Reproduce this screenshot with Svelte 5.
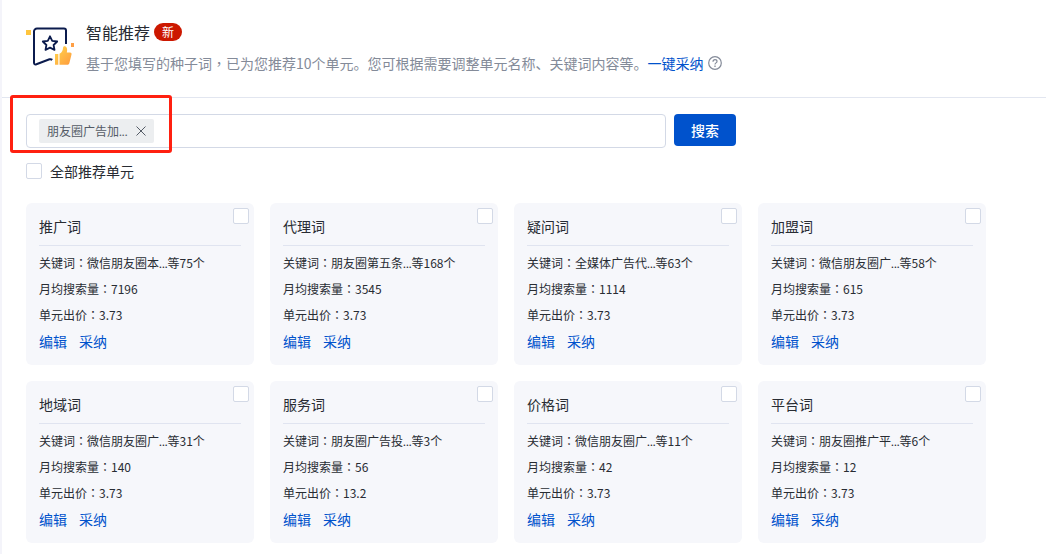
<script lang="ts">
	interface Unit {
		name: string;
		keyword: string;
		count: number;
		volume: number;
		price: number;
	}

	const units: Unit[] = [
		{ name: '推广词', keyword: '微信朋友圈本', count: 75, volume: 7196, price: 3.73 },
		{ name: '代理词', keyword: '朋友圈第五条', count: 168, volume: 3545, price: 3.73 },
		{ name: '疑问词', keyword: '全媒体广告代', count: 63, volume: 1114, price: 3.73 },
		{ name: '加盟词', keyword: '微信朋友圈广', count: 58, volume: 615, price: 3.73 },
		{ name: '地域词', keyword: '微信朋友圈广', count: 31, volume: 140, price: 3.73 },
		{ name: '服务词', keyword: '朋友圈广告投', count: 3, volume: 56, price: 13.2 },
		{ name: '价格词', keyword: '微信朋友圈广', count: 11, volume: 42, price: 3.73 },
		{ name: '平台词', keyword: '朋友圈推广平', count: 6, volume: 12, price: 3.73 }
	];

	let seeds = $state(['朋友圈广告加']);
	let query = $state('');
	let selected = $state(units.map(() => false));
	let allSelected = $derived(selected.every(Boolean));

	function toggleAll() {
		const next = !allSelected;
		selected = units.map(() => next);
	}

	function removeSeed(seed: string) {
		seeds = seeds.filter((s) => s !== seed);
	}
</script>

<main class="panel">
	<header class="intro">
		<svg class="intro-icon" width="48" height="44" viewBox="0 0 48 44" fill="none" aria-hidden="true">
			<defs>
				<linearGradient id="thumb" x1="0" y1="0" x2="1" y2="1">
					<stop offset="0" stop-color="#ffd84d" />
					<stop offset="1" stop-color="#ff9a3d" />
				</linearGradient>
			</defs>
			<rect x="0" y="6" width="5" height="5" fill="#ffc53d" />
			<rect x="45" y="19" width="3" height="4" fill="#ff9f45" />
			<path
				d="M40 20V6.500a2 2 0 0 0-2-2H11a3 3 0 0 0-3 3V38.500q0 2.600 2.400 1.800L23.500 35.300q1.400-.5 2.800.6"
				stroke="#0b1b4d"
				stroke-width="2"
			/>
			<path
				d="M24 12.300l2.200 4.500 5 .7-3.600 3.500.9 4.900-4.500-2.300-4.500 2.300.9-4.900-3.600-3.500 5-.7z"
				stroke="#0b1b4d"
				stroke-width="1.800"
				stroke-linejoin="round"
			/>
			<path
				d="M29 30h3.300v10.700H29zM33.500 29.800c2.500-1.400 3.300-3.200 3.500-5.800.1-1.400.9-1.900 1.800-1.700 2.500.6 2.700 3.400 2 6.200H44c1.200 0 1.800.8 1.500 1.900l-2.100 8.500c-.3 1.200-1 1.800-2.100 1.800h-7.800z"
				fill="url(#thumb)"
			/>
		</svg>
		<div>
			<h1>智能推荐 <span class="badge">新</span></h1>
			<p>
				基于您填写的种子词<span class="mark">，</span>已为您推荐10个单元。您可根据需要调整单元名称、关键词内容等。<a href="#adopt-all">一键采纳</a>
				<button class="help" type="button" aria-label="帮助">
					<svg width="14" height="14" viewBox="0 0 14 14" fill="none" stroke="currentColor">
						<circle cx="7" cy="7" r="6.300" stroke-width="1.200" />
						<path d="M5 5.700c0-1.300.8-2.100 2-2.100s2 .7 2 1.800c0 1.500-2 1.500-2 3.100" stroke-width="1.200" />
						<path d="M7 9.600v1.300" stroke-width="1.300" />
					</svg>
				</button>
			</p>
		</div>
	</header>

	<section class="content">
		<form class="search" onsubmit={(e) => e.preventDefault()}>
			<div class="field">
				{#each seeds as seed (seed)}
					<span class="tag">
						<span>{seed}<span class="dots">...</span></span>
						<button type="button" aria-label="删除" onclick={() => removeSeed(seed)}>
							<svg width="10" height="10" viewBox="0 0 10 10" stroke="currentColor">
								<path d="M.5.5l9 9M9.500.5l-9 9" />
							</svg>
						</button>
					</span>
				{/each}
				<input type="text" aria-label="种子词" bind:value={query} />
			</div>
			<button class="submit" type="submit">搜索</button>
			<div class="highlight"></div>
		</form>

		<label class="select-all">
			<input type="checkbox" checked={allSelected} onchange={toggleAll} />
			全部推荐单元
		</label>

		<div class="cards">
			{#each units as unit, i}
				<article class="card">
					<input type="checkbox" aria-label={unit.name} bind:checked={selected[i]} />
					<h2>{unit.name}</h2>
					<p>关键词<span class="mark">：</span>{unit.keyword}<span class="dots">...</span>等{unit.count}个</p>
					<p>月均搜索量<span class="mark">：</span>{unit.volume}</p>
					<p>单元出价<span class="mark">：</span>{unit.price}</p>
					<div class="actions">
						<a href="#edit">编辑</a>
						<a href="#adopt">采纳</a>
					</div>
				</article>
			{/each}
		</div>
	</section>
</main>

<style>
	:global(body) {
		background: #fff;
	}

	.panel {
		border-left: 2px solid #f4f4fa;
		color: #282c33;
		font-family: 'Noto Sans CJK SC', sans-serif;
		font-size: 14px;
		line-height: 20px;
	}

	h1,
	h2,
	p {
		margin: 0;
		font-weight: 400;
	}

	a {
		color: #0052cc;
		text-decoration: none;
	}

	button,
	input {
		font: inherit;
	}

	/* centred full-width punctuation */
	.mark {
		font-family: 'Noto Sans CJK TC', sans-serif;
	}

	.dots {
		font-family: Lato, sans-serif;
		line-height: 1;
	}

	.intro {
		display: flex;
		gap: 12px;
		padding: 22px 24px 24px;
		border-bottom: 1px solid #e2e6f0;
	}

	.intro-icon {
		flex: none;
		margin-top: 2px;
	}

	.intro h1 {
		display: flex;
		align-items: center;
		gap: 4px;
		font-size: 16px;
		line-height: 20px;
	}

	.badge {
		padding: 0 8px;
		border-radius: 9px;
		background: #cc1800;
		color: #fff;
		font-size: 12px;
		line-height: 18px;
	}

	.intro p {
		display: flex;
		align-items: center;
		margin-top: 11px;
		color: #848b99;
	}

	.intro p a {
		margin-right: 4px;
	}

	.help {
		display: flex;
		padding: 0;
		border: 0;
		background: none;
		color: #848b99;
	}

	.content {
		padding: 16px 60px 12px 24px;
	}

	.search {
		position: relative;
		display: flex;
		gap: 8px;
	}

	.field {
		box-sizing: border-box;
		display: flex;
		flex: 0 1 640px;
		align-items: center;
		gap: 8px;
		height: 34px;
		padding: 0 12px;
		border: 1px solid #d3d9e6;
		border-radius: 4px;
	}

	.field input {
		flex: 1;
		min-width: 0;
		padding: 0;
		border: 0;
		outline: 0;
	}

	.tag {
		display: flex;
		align-items: center;
		gap: 8px;
		padding: 0 8px;
		border-radius: 2px;
		background: #eceef0;
		color: #545b66;
		font-size: 12px;
		line-height: 24px;
		white-space: nowrap;
	}

	.tag button {
		display: flex;
		padding: 0;
		border: 0;
		background: none;
		color: #545b66;
	}

	.submit {
		height: 32px;
		padding: 0 17px;
		border: 0;
		border-radius: 4px;
		background: #0052cc;
		color: #fff;
		font-weight: 500;
	}

	.highlight {
		position: absolute;
		top: -19px;
		left: -16px;
		box-sizing: border-box;
		width: 162px;
		height: 58px;
		border: 3px solid #ff2010;
		border-radius: 3px;
		pointer-events: none;
	}

	input[type='checkbox'] {
		appearance: none;
		flex: none;
		box-sizing: border-box;
		width: 16px;
		height: 16px;
		margin: 0;
		border: 1px solid #d3d9e6;
		border-radius: 2px;
		background: #fff;
	}

	input[type='checkbox']:checked {
		border-color: #0052cc;
		background: #0052cc;
	}

	.select-all {
		display: flex;
		align-items: center;
		gap: 8px;
		width: fit-content;
		margin-top: 13px;
	}

	.cards {
		display: grid;
		grid-template-columns: repeat(4, 1fr);
		gap: 16px;
		margin-top: 22px;
	}

	.card {
		position: relative;
		padding: 13px 13px 11px;
		border-radius: 6px;
		background: #f6f7fb;
	}

	.card > input {
		position: absolute;
		top: 5px;
		right: 5px;
	}

	.card h2 {
		margin-bottom: 4px;
		padding-bottom: 9px;
		border-bottom: 1px solid #e0e4f0;
		font-size: 14px;
	}

	.card p {
		font-size: 12px;
		line-height: 26px;
		white-space: nowrap;
	}

	.actions {
		display: flex;
		gap: 12px;
		line-height: 26px;
	}
</style>
